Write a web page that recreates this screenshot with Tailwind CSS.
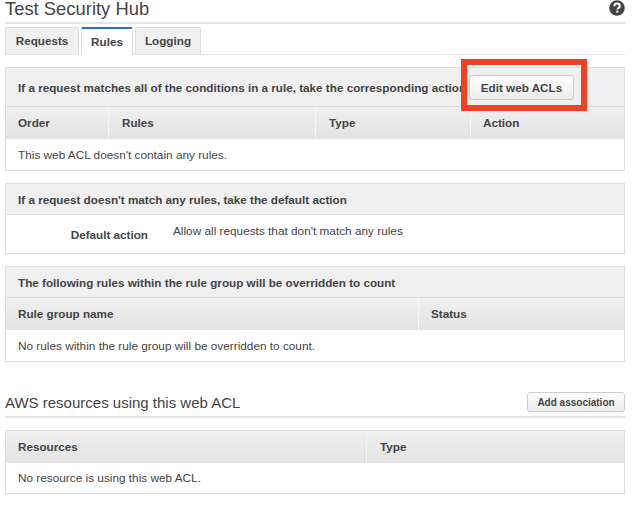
<!DOCTYPE html>
<html lang="en">
<head>
  <meta charset="UTF-8" />
  <title>Test Security Hub</title>
  <script src="https://cdn.jsdelivr.net/npm/@tailwindcss/browser@4"></script>
</head>
<body class="bg-white w-[640px] h-[505px] overflow-hidden relative font-['Liberation_Sans',Arial,sans-serif] text-[#444]">
  <div class="pl-[5px] pr-[15px]">
    <!-- Title -->
    <div class="h-[24px] border-b-2 border-[#e6e6e6] flex justify-between items-center">
      <h1 class="text-[18.4px] leading-[16px] text-[#444] -mt-[4px]">Test Security Hub</h1>
      <svg class="w-[16px] h-[16px] -mt-[7px]" viewBox="0 0 16 16">
        <circle cx="8" cy="8" r="7.8" fill="#444" />
        <path d="M5.3 6.2c0-1.6 1.2-2.6 2.8-2.6s2.7.9 2.7 2.3c0 2-2.2 1.9-2.2 3.6" fill="none" stroke="#fff" stroke-width="2" />
        <rect x="7.3" y="10.6" width="2" height="2" fill="#fff" />
      </svg>
    </div>

    <!-- Tabs -->
    <div class="h-[28px] mt-[3px] flex gap-[2px] border-b border-[#e6e6e6] text-[11.7px] font-bold">
      <div class="w-[74px] h-[27px] bg-[#f0f0f0] border border-b-0 border-[#ddd] rounded-t-[2px] flex items-center justify-center">Requests</div>
      <div class="w-[52px] h-[28px] bg-white border-x border-[#ddd] border-t-2 border-t-[#2a6fc0] rounded-t-[2px] flex items-center justify-center">Rules</div>
      <div class="w-[66px] h-[27px] bg-[#f0f0f0] border border-b-0 border-[#ddd] rounded-t-[2px] flex items-center justify-center">Logging</div>
    </div>

    <!-- Rules -->
    <section class="mt-[12px] h-[104px] border border-[#ddd] text-[11.8px]">
      <div class="h-[39px] bg-[#f0f0f0] border-b border-[#ddd] pl-[12px] pt-[2px] flex items-center font-bold text-[11.7px] whitespace-nowrap">
        <span>If a request matches all of the conditions in a rule, take the corresponding action</span>
        <button class="absolute left-[469px] top-[75px] w-[105px] h-[25px] bg-gradient-to-b from-white to-[#ececec] border border-[#ccc] rounded-[3px] font-bold">Edit web ACLs</button>
      </div>
      <div class="h-[32px] grid grid-cols-[103px_207px_155px_1fr] bg-gradient-to-b from-[#f0f0f0] to-[#e2e2e2] font-bold text-[11.7px]">
        <div class="pl-[12px] flex items-center border-r border-[#f6f6f6]">Order</div>
        <div class="pl-[13px] flex items-center border-r border-[#f6f6f6]">Rules</div>
        <div class="pl-[13px] flex items-center border-r border-[#f6f6f6]">Type</div>
        <div class="pl-[12px] flex items-center">Action</div>
      </div>
      <div class="h-[31px] pl-[12px] pt-[2px] flex items-center">This web ACL doesn't contain any rules.</div>
    </section>

    <!-- Default action -->
    <section class="mt-[12px] h-[71px] border border-[#ddd] text-[11.8px]">
      <div class="h-[31px] bg-[#f0f0f0] border-b border-[#ddd] pl-[12px] pt-[2px] flex items-center font-bold text-[11.7px]">If a request doesn't match any rules, take the default action</div>
      <div class="flex pt-[9px] leading-[15px]">
        <div class="w-[142px] text-right font-bold text-[11.7px] pt-[3px]">Default action</div>
        <div class="ml-[25px]">Allow all requests that don't match any rules</div>
      </div>
    </section>

    <!-- Overridden rules -->
    <section class="mt-[12px] h-[96px] border border-[#ddd] text-[11.8px]">
      <div class="h-[31px] bg-[#f0f0f0] border-b border-[#ddd] pl-[12px] pt-[2px] flex items-center font-bold text-[11.7px]">The following rules within the rule group will be overridden to count</div>
      <div class="h-[32px] grid grid-cols-[413px_1fr] bg-gradient-to-b from-[#f0f0f0] to-[#e2e2e2] font-bold text-[11.7px]">
        <div class="pl-[12px] flex items-center border-r border-[#f6f6f6]">Rule group name</div>
        <div class="pl-[12px] flex items-center">Status</div>
      </div>
      <div class="h-[31px] pl-[12px] pt-[2px] flex items-center">No rules within the rule group will be overridden to count.</div>
    </section>

    <!-- Resources -->
    <div class="mt-[22px] h-[34px] border-b-2 border-[#e6e6e6] flex justify-between items-start">
      <h2 class="text-[15px] leading-[26px] mt-[6px]">AWS resources using this web ACL</h2>
      <button class="w-[98px] h-[20px] mt-[8px] bg-gradient-to-b from-white to-[#ececec] border border-[#ccc] rounded-[3px] text-[10px] font-bold">Add association</button>
    </div>
    <section class="mt-[12px] h-[64px] border border-[#ddd] text-[11.8px]">
      <div class="h-[32px] grid grid-cols-[361px_1fr] bg-gradient-to-b from-[#f0f0f0] to-[#e2e2e2] font-bold text-[11.7px]">
        <div class="pl-[12px] flex items-center border-r border-[#f6f6f6]">Resources</div>
        <div class="pl-[13px] flex items-center">Type</div>
      </div>
      <div class="h-[30px] pl-[12px] pt-[1px] flex items-center">No resource is using this web ACL.</div>
    </section>
  </div>

  <!-- Red annotation over the page -->
  <div class="absolute left-[461px] top-[59px] w-[126px] h-[52px] border-[6px] border-[#f04124] pointer-events-none"></div>
</body>
</html>
